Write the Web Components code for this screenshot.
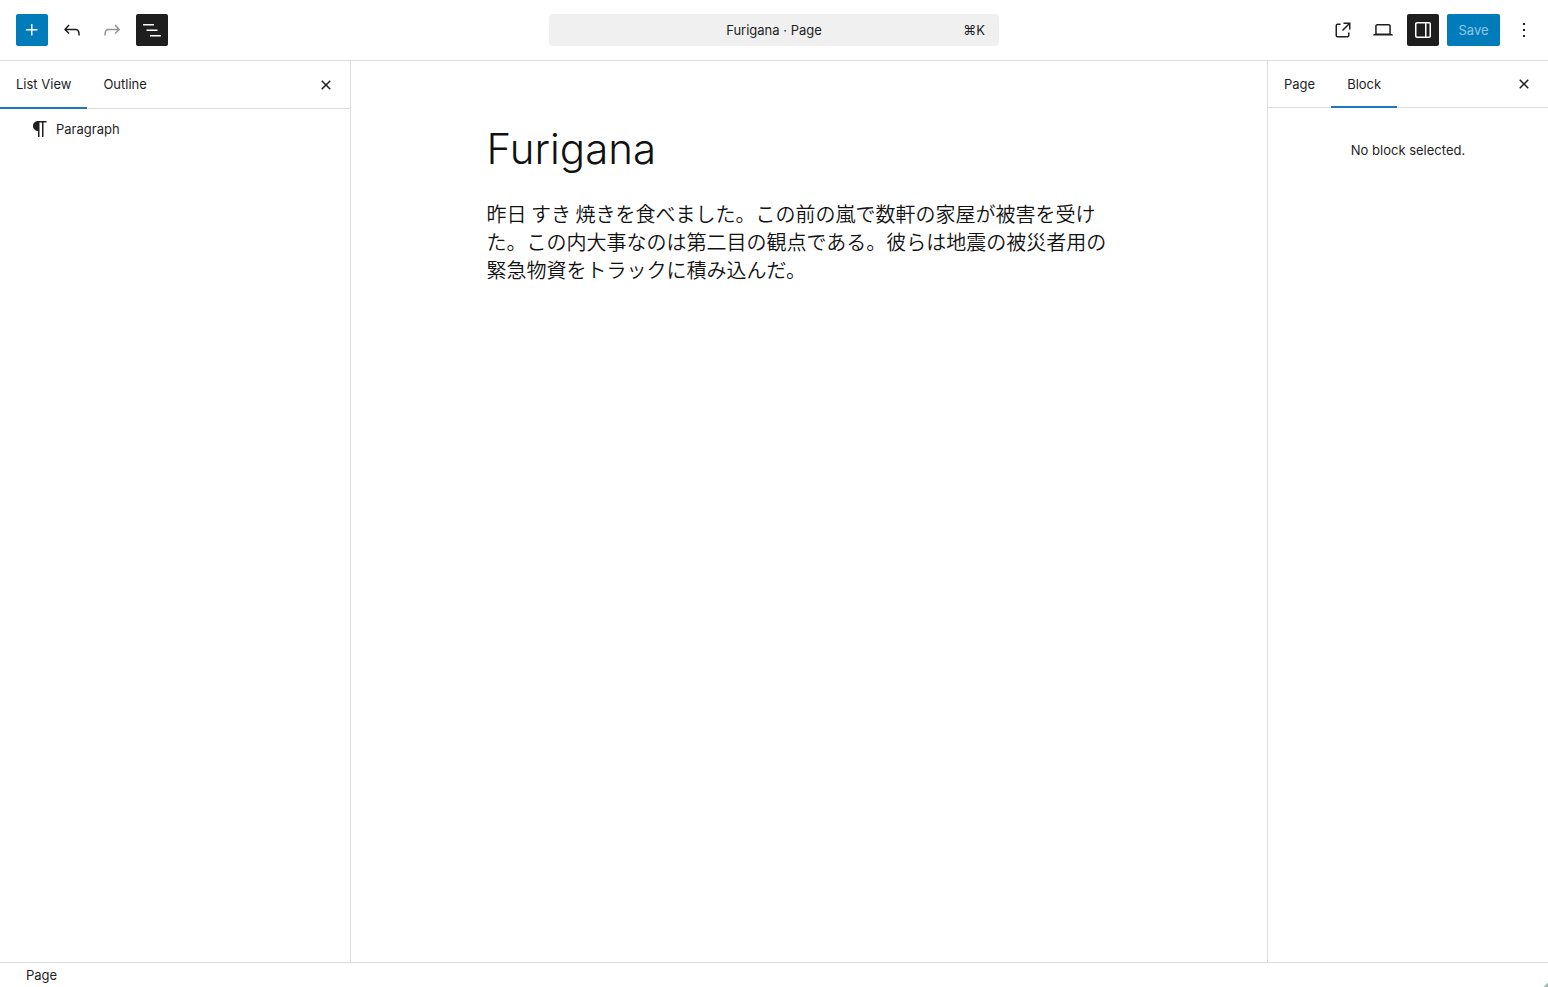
<!DOCTYPE html>
<html lang="en">
<head>
<meta charset="utf-8">
<title>Furigana · Page</title>
<style>
html, body { height: 100%; margin: 0; }
body { font: 13px/20px Inter, "Noto Sans", sans-serif; color: #1e1e1e; background: #fff; }
</style>
</head>
<body>
<editor-app></editor-app>
<script>
const ICONS = {
  plus: 'M11 12.5V17.5H12.5V12.5H17.5V11H12.5V6H11V11H6V12.5H11Z',
  undo: 'M18.3 11.7c-.6-.6-1.4-.9-2.3-.9H6.7l2.9-3.3-1.1-1-4.5 5L8.5 16l1-1-2.7-2.7H16c.5 0 .9.2 1.3.5 1 1 1 3.4 1 4.5v.3h1.5v-.2c0-1.5 0-4.3-1.5-5.7z',
  redo: 'M15.6 6.5l-1.1 1 2.9 3.3H8c-.9 0-1.7.3-2.3.9-1.4 1.5-1.4 4.2-1.4 5.6v.2h1.5v-.3c0-1.1 0-3.5 1-4.5.3-.3.7-.5 1.3-.5h9.2L14.5 15l1.1 1.1 4.6-4.6-4.6-5z',
  list: 'M3 6h11v1.5H3V6Zm3.5 5.5h11V13h-11v-1.5ZM21 17H10v1.5h11V17Z',
  external: 'M19.5 4.5h-7V6h4.44l-5.97 5.97 1.06 1.06L18 7.06v4.44h1.5v-7Zm-13 1a2 2 0 0 0-2 2v10a2 2 0 0 0 2 2h10a2 2 0 0 0 2-2v-3H17v3a.5.5 0 0 1-.5.5h-10a.5.5 0 0 1-.5-.5v-10a.5.5 0 0 1 .5-.5h3V5.5h-3Z',
  desktop: 'M20.5 16h-.7V8c0-1.1-.9-2-2-2H6.2c-1.1 0-2 .9-2 2v8h-.7c-.8 0-1.5.7-1.5 1.5h20c0-.8-.7-1.5-1.5-1.5zM5.7 8c0-.3.2-.5.5-.5h11.6c.3 0 .5.2.5.5v7.6H5.7V8z',
  drawer: 'M18 4H6c-1.1 0-2 .9-2 2v12c0 1.1.9 2 2 2h12c1.1 0 2-.9 2-2V6c0-1.1-.9-2-2-2zm-4 14.5H6c-.3 0-.5-.2-.5-.5V6c0-.3.2-.5.5-.5h8v13zm4.5-.5c0 .3-.2.5-.5.5h-2.5v-13H18c.3 0 .5.2.5.5v12z',
  close: 'M12 13.06l3.712 3.713 1.061-1.06L13.061 12l3.712-3.712-1.06-1.06L12 10.938 8.288 7.227l-1.061 1.06L10.939 12l-3.712 3.712 1.06 1.061L12 13.061z',
  more: 'M13 19h-2v-2h2v2zm0-6h-2v-2h2v2zm0-6h-2V5h2v2z',
  paragraph: 'm9.996 14v-.225l.004 0v6.225h1.5v-14.5h2.5v14.5h1.5v-14.5h3v-1.5h-8.504c-2.761 0-5 2.239-5 5 0 2.761 2.239 5 5 5z'
};

function define(name, html, setup) {
  const template = document.createElement('template');
  template.innerHTML = '<style>:host,*{box-sizing:border-box}button{font:inherit;color:inherit;border:0;margin:0;background:none;padding:0}</style>' + html;
  customElements.define(name, class extends HTMLElement {
    connectedCallback() {
      if (this.shadowRoot) return;
      this.attachShadow({ mode: 'open' }).append(template.content.cloneNode(true));
      if (setup) setup(this, this.shadowRoot);
    }
  });
}

define('ui-icon', `
<style>:host{display:block;width:24px;height:24px}svg{display:block;fill:currentColor}</style>
<svg width="24" height="24" viewBox="0 0 24 24" aria-hidden="true"><path fill-rule="evenodd"/></svg>`,
(host, root) => root.querySelector('path').setAttribute('d', ICONS[host.getAttribute('name')]));

define('icon-button', `
<style>
:host{display:block}
button{display:flex;align-items:center;justify-content:center;width:32px;height:32px;border-radius:2px}
:host([variant=primary]) button{background:#007cba;color:#fff}
:host([variant=pressed]) button{background:#1e1e1e;color:#fff}
:host([size=small]) button{width:24px;height:24px}
button:disabled{color:#949494}
</style>
<button type="button"></button>`,
(host, root) => {
  const button = root.querySelector('button');
  button.setAttribute('aria-label', host.getAttribute('label'));
  button.disabled = host.hasAttribute('disabled');
  const icon = document.createElement('ui-icon');
  icon.setAttribute('name', host.getAttribute('icon'));
  button.append(icon);
});

define('panel-tab', `
<style>
:host{display:flex;margin-bottom:-1px;border-bottom:2px solid transparent}
:host([selected]){border-color:#1e77bc}
button{padding:0 16px;display:flex;align-items:center}
</style>
<button type="button" role="tab"><slot></slot></button>`,
(host, root) => root.querySelector('button').setAttribute('aria-selected', host.hasAttribute('selected')));

define('panel-tabs', `
<style>
:host{display:flex;justify-content:space-between;align-items:stretch;border-bottom:1px solid #ddd}
.tabs{display:flex}
.close{display:flex;align-items:center;padding-right:12px}
</style>
<div class="tabs" role="tablist"><slot></slot></div>
<div class="close"><icon-button size="small" icon="close" label="Close"></icon-button></div>`);

define('document-bar', `
<style>
:host{display:block}
button{display:grid;grid-template-columns:1fr auto 1fr;align-items:center;width:100%;height:32px;padding:0 14px;background:#f0f0f0;border-radius:4px}
.key{text-align:right}
</style>
<button type="button"><span></span><span>Furigana · Page</span><span class="key">⌘K</span></button>`);

define('editor-header', `
<style>
:host{display:grid;grid-template-columns:1fr minmax(200px,450px) 1fr;align-items:center;height:61px;border-bottom:1px solid #ddd}
div{display:flex;align-items:center;gap:8px}
.tools{padding-left:16px}
.actions{justify-content:flex-end;padding-right:8px}
.save{width:53px;height:32px;border-radius:2px;background:#007cba;color:#94c6e6}
</style>
<div class="tools">
<icon-button variant="primary" icon="plus" label="Toggle block inserter"></icon-button>
<icon-button icon="undo" label="Undo"></icon-button>
<icon-button icon="redo" label="Redo" disabled></icon-button>
<icon-button variant="pressed" icon="list" label="Document overview"></icon-button>
</div>
<document-bar></document-bar>
<div class="actions">
<icon-button icon="external" label="View page"></icon-button>
<icon-button icon="desktop" label="Preview"></icon-button>
<icon-button variant="pressed" icon="drawer" label="Settings"></icon-button>
<button type="button" class="save" disabled>Save</button>
<icon-button icon="more" label="Options"></icon-button>
</div>`);

define('list-view', `
<style>
:host{display:block;border-right:1px solid #ddd}
panel-tabs{height:48px}
.row{display:flex;align-items:center;gap:4px;width:100%;height:40px;padding-left:28px}
</style>
<panel-tabs><panel-tab selected>List View</panel-tab><panel-tab>Outline</panel-tab></panel-tabs>
<button type="button" class="row"><ui-icon name="paragraph"></ui-icon><span>Paragraph</span></button>`);

define('block-settings', `
<style>
:host{display:block;border-left:1px solid #ddd}
panel-tabs{height:47px}
p{margin:0;padding:32px 16px;text-align:center}
</style>
<panel-tabs><panel-tab>Page</panel-tab><panel-tab selected>Block</panel-tab></panel-tabs>
<p>No block selected.</p>`);

define('post-content', `
<style>
:host{display:block;padding:64px 24px;color:#111}
article{max-width:645px;margin:0 auto}
h1{margin:0;font-size:42px;line-height:48px;font-weight:350}
p{margin:0;padding:27px 16px 0 0;font:350 20px/28px "Noto Sans CJK JP",sans-serif}
</style>
<article>
<h1>Furigana</h1>
<p lang="ja">昨日 すき 焼きを食べました。この前の嵐で数軒の家屋が被害を受けた。この内大事なのは第二目の観点である。彼らは地震の被災者用の緊急物資をトラックに積み込んだ。</p>
</article>`);

define('editor-footer', `
<style>
:host{display:flex;align-items:center;position:relative;height:25px;padding-left:26px;border-top:1px solid #ddd}
i{position:absolute;right:0;bottom:0;width:4px;height:4px;background:linear-gradient(135deg,transparent 50%,#9dbdb4 50%)}
</style>
<span>Page</span><i></i>`);

define('editor-app', `
<style>
:host{display:grid;grid-template:auto 1fr auto / 351px 1fr 281px;min-height:100vh}
editor-header,editor-footer{grid-column:1/-1}
</style>
<editor-header></editor-header>
<list-view></list-view>
<post-content></post-content>
<block-settings></block-settings>
<editor-footer></editor-footer>`);
</script>
</body>
</html>
